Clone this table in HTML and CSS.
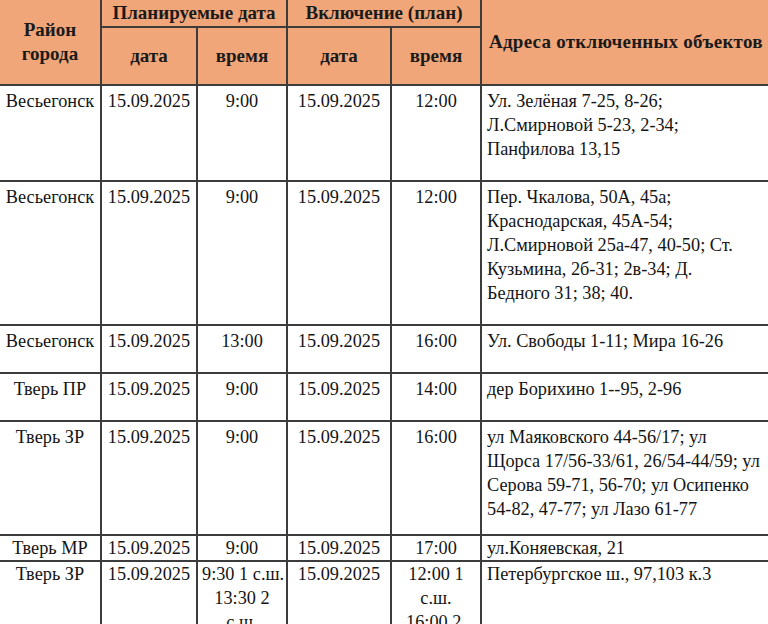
FILE: index.html
```html
<!DOCTYPE html>
<html lang="ru">
<head>
<meta charset="utf-8">
<title>Отключения</title>
<link rel="stylesheet" href="styles.css">
</head>
<body>
<table class="grid">
  <colgroup>
    <col class="c1"><col class="c2"><col class="c3"><col class="c4"><col class="c5"><col class="c6">
  </colgroup>
  <thead>
    <tr class="h1">
      <th rowspan="2" class="first">Район<br>города</th>
      <th colspan="2">Планируемые дата</th>
      <th colspan="2">Включение (план)</th>
      <th rowspan="2" class="last">Адреса отключенных объектов</th>
    </tr>
    <tr class="h2">
      <th>дата</th>
      <th>время</th>
      <th>дата</th>
      <th>время</th>
    </tr>
  </thead>
  <tbody>
    <tr class="r1">
      <td class="first">Весьегонск</td><td>15.09.2025</td><td>9:00</td><td>15.09.2025</td><td>12:00</td>
      <td class="addr">Ул. Зелёная 7-25, 8-26;<br>Л.Смирновой 5-23, 2-34;<br>Панфилова 13,15</td>
    </tr>
    <tr class="r2">
      <td class="first">Весьегонск</td><td>15.09.2025</td><td>9:00</td><td>15.09.2025</td><td>12:00</td>
      <td class="addr">Пер. Чкалова, 50А, 45а;<br>Краснодарская, 45А-54;<br>Л.Смирновой 25а-47, 40-50; Ст.<br>Кузьмина, 2б-31; 2в-34; Д.<br>Бедного 31; 38; 40.</td>
    </tr>
    <tr class="r3">
      <td class="first">Весьегонск</td><td>15.09.2025</td><td>13:00</td><td>15.09.2025</td><td>16:00</td>
      <td class="addr">Ул. Свободы 1-11; Мира 16-26</td>
    </tr>
    <tr class="r3">
      <td class="first">Тверь ПР</td><td>15.09.2025</td><td>9:00</td><td>15.09.2025</td><td>14:00</td>
      <td class="addr">дер Борихино 1--95, 2-96</td>
    </tr>
    <tr class="r5">
      <td class="first">Тверь ЗР</td><td>15.09.2025</td><td>9:00</td><td>15.09.2025</td><td>16:00</td>
      <td class="addr">ул Маяковского 44-56/17; ул<br>Щорса 17/56-33/61, 26/54-44/59; ул<br>Серова 59-71, 56-70; ул Осипенко<br>54-82, 47-77; ул Лазо 61-77</td>
    </tr>
    <tr class="r6 tight">
      <td class="first">Тверь МР</td><td>15.09.2025</td><td>9:00</td><td>15.09.2025</td><td>17:00</td>
      <td class="addr">ул.Коняевская, 21</td>
    </tr>
    <tr class="r7 tight">
      <td class="first">Тверь ЗР</td><td>15.09.2025</td><td>9:30 1 с.ш.<br>13:30 2<br>с.ш.</td><td>15.09.2025</td><td>12:00 1<br>с.ш.<br>16:00 2.<br>с.ш.</td>
      <td class="addr">Петербургское ш., 97,103 к.3</td>
    </tr>
  </tbody>
</table>
</body>
</html>
```

FILE: styles.css
```css
html, body {
  margin: 0;
  padding: 0;
  background: #ffffff;
  overflow: hidden;
  width: 768px;
  height: 624px;
}

.grid {
  border-collapse: collapse;
  table-layout: fixed;
  width: 800px;
  font-family: "Liberation Serif", "Times New Roman", serif;
  font-size: 18.3px;
  line-height: 24px;
  color: #141414;
}

.c1 { width: 101px; }
.c2 { width: 96px; }
.c3 { width: 90px; }
.c4 { width: 104px; }
.c5 { width: 90px; }
.c6 { width: 319px; }

.grid th,
.grid td {
  border: 2px solid #3c3c3c;
  padding: 0 4px;
  text-align: center;
}

.grid th {
  background: #f1a679;
  font-weight: bold;
  font-size: 19px;
  color: #1a1a1a;
  vertical-align: middle;
  white-space: nowrap;
}

.grid thead tr.h1 th { border-top: none; }
.grid .first { border-left: none; }
.grid th.last {
  border-right: none;
  text-align: left;
  padding-left: 7px;
  letter-spacing: 0.25px;
}

.h1 { height: 27px; }
.h2 { height: 58px; }

.grid td {
  vertical-align: top;
  padding-top: 3px;
  white-space: nowrap;
}

.grid td.addr {
  text-align: left;
  padding-left: 5px;
  border-right: none;
}

.r1 { height: 96px; }
.r2 { height: 144px; }
.r3 { height: 48px; }
.r5 { height: 114px; }
.r6 { height: 24px; }
.r7 { height: 100px; }

.tight td { padding-top: 0; }
```
